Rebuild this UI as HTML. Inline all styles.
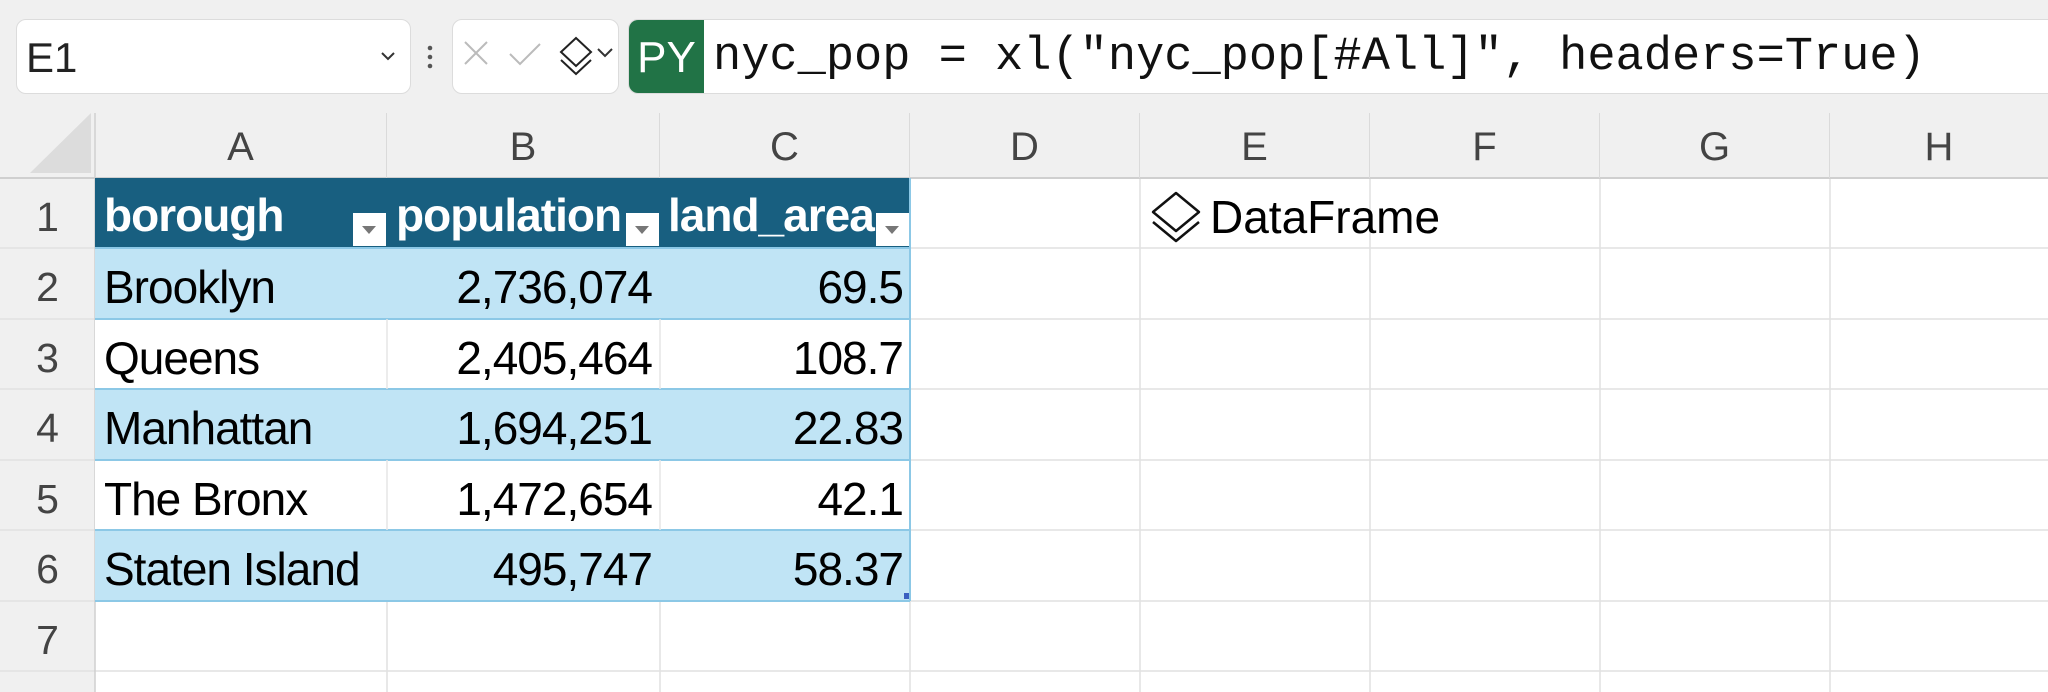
<!DOCTYPE html>
<html><head><meta charset="utf-8"><style>
*{margin:0;padding:0;box-sizing:border-box}
html,body{width:2048px;height:692px;overflow:hidden}
body{background:#f0f0f0;position:relative;font-family:"Liberation Sans",sans-serif}
.abs{position:absolute}
.box{position:absolute;background:#fff;border:1px solid #dcdcdc;border-radius:10px}
.ch{position:absolute;top:113px;height:65px;font-size:40px;color:#444;text-align:center;line-height:68px;border-right:1px solid #dadada}
.rh{position:absolute;left:0;width:95px;font-size:41px;color:#444;text-align:center;height:70px;line-height:78px;overflow:hidden}
.c{position:absolute;font-size:46px;color:#000;line-height:78px;white-space:nowrap;letter-spacing:-1px}
.hd{color:#fff;font-weight:bold;line-height:74px}
.r{text-align:right}
.fb{position:absolute;top:213px;width:33px;height:33px;background:#fff}
.fb:after{content:"";position:absolute;left:9px;top:13px;border-left:7px solid transparent;border-right:7px solid transparent;border-top:8px solid #777}
</style></head><body>
<div class="box" style="left:16px;top:19px;width:395px;height:75px"></div>
<div class="abs" style="left:26px;top:19px;line-height:77px;font-size:42px;color:#222">E1</div>
<svg class="abs" style="left:380px;top:50px" width="16" height="12"><path d="M2 3l6 6 6-6" fill="none" stroke="#333" stroke-width="2"/></svg>
<svg class="abs" style="left:426px;top:44px" width="8" height="28"><circle cx="4" cy="4" r="2.3" fill="#555"/><circle cx="4" cy="13" r="2.3" fill="#555"/><circle cx="4" cy="22" r="2.3" fill="#555"/></svg>
<div class="box" style="left:452px;top:19px;width:167px;height:75px"></div>
<svg class="abs" style="left:462px;top:36px" width="160" height="46">
<path d="M3 6l22 22M25 6L3 28" stroke="#bbb" stroke-width="2" fill="none"/>
<path d="M48 18l10 10 20-20" stroke="#bbb" stroke-width="2" fill="none"/>
<path d="M114 2l15 14-15 14-15-14z" stroke="#222" stroke-width="2" fill="#fff"/>
<path d="M99 24l15 14 15-14" stroke="#222" stroke-width="2" fill="none"/>
<path d="M136 13l7 7 7-7" stroke="#333" stroke-width="2" fill="none"/>
</svg>
<div class="abs" style="left:628px;top:19px;width:1430px;height:75px;background:#fff;border:1px solid #dcdcdc;border-radius:10px 0 0 10px;overflow:hidden">
<div style="position:absolute;left:0;top:0;width:75px;height:75px;background:#217346;color:#fff;font-size:44px;line-height:75px;text-align:center">PY</div>
</div>
<div class="abs" style="left:713px;top:19px;line-height:77px;font-size:47px;font-family:'Liberation Mono',monospace;color:#111;white-space:nowrap">nyc_pop = xl("nyc_pop[#All]", headers=True)</div>

<div class="abs" style="left:95px;top:178px;width:1953px;height:514px;background:#fff"></div>
<svg class="abs" style="left:0;top:0" width="2048" height="692">
<path d="M30 173L91 113V173Z" fill="#dcdcdc"/>
<g stroke="#e1e1e1" stroke-width="1.5">
<line x1="387" y1="178" x2="387" y2="692"/><line x1="660" y1="178" x2="660" y2="692"/>
<line x1="910" y1="178" x2="910" y2="692"/><line x1="1140" y1="178" x2="1140" y2="692"/>
<line x1="1370" y1="178" x2="1370" y2="692"/><line x1="1600" y1="178" x2="1600" y2="692"/>
<line x1="1830" y1="178" x2="1830" y2="692"/>
<line x1="0" y1="248" x2="2048" y2="248"/><line x1="0" y1="319" x2="2048" y2="319"/>
<line x1="0" y1="389" x2="2048" y2="389"/><line x1="0" y1="460" x2="2048" y2="460"/>
<line x1="0" y1="530" x2="2048" y2="530"/><line x1="0" y1="601" x2="2048" y2="601"/>
<line x1="0" y1="671" x2="2048" y2="671"/>
</g>
<line x1="0" y1="178" x2="2048" y2="178" stroke="#cfcfcf" stroke-width="2"/>
<line x1="95" y1="113" x2="95" y2="692" stroke="#cfcfcf" stroke-width="1.5"/>
<rect x="95" y="178" width="815" height="70" fill="#185f80"/>
<rect x="95" y="248" width="815" height="71" fill="#c0e4f5"/>
<rect x="95" y="319" width="815" height="70" fill="#fff"/>
<rect x="95" y="389" width="815" height="71" fill="#c0e4f5"/>
<rect x="95" y="460" width="815" height="70" fill="#fff"/>
<rect x="95" y="530" width="815" height="71" fill="#c0e4f5"/>
<g stroke="#8cc8e6" stroke-width="2"><line x1="95" y1="248" x2="910" y2="248"/><line x1="95" y1="319" x2="910" y2="319"/><line x1="95" y1="389" x2="910" y2="389"/><line x1="95" y1="460" x2="910" y2="460"/><line x1="95" y1="530" x2="910" y2="530"/><line x1="95" y1="601" x2="910" y2="601"/><line x1="910" y1="178" x2="910" y2="601"/></g>
<g stroke="#e6e6e6" stroke-width="1.5"><line x1="387" y1="319" x2="387" y2="389"/><line x1="660" y1="319" x2="660" y2="389"/><line x1="387" y1="460" x2="387" y2="530"/><line x1="660" y1="460" x2="660" y2="530"/></g>
<rect x="904" y="593" width="5" height="6" fill="#3a5fc0"/>
<path d="M1176 193l23 19-23 19-23-19z" stroke="#111" stroke-width="2.5" fill="#fff" stroke-linejoin="round"/>
<path d="M1153 222l23 19 23-19" stroke="#111" stroke-width="2.5" fill="none" stroke-linejoin="round"/>
</svg>
<div class="ch" style="left:95px;width:292px">A</div>
<div class="ch" style="left:387px;width:273px">B</div>
<div class="ch" style="left:660px;width:250px">C</div>
<div class="ch" style="left:910px;width:230px">D</div>
<div class="ch" style="left:1140px;width:230px">E</div>
<div class="ch" style="left:1370px;width:230px">F</div>
<div class="ch" style="left:1600px;width:230px">G</div>
<div class="ch" style="left:1830px;width:218px;border:none">H</div>
<div class="rh" style="top:178px">1</div><div class="rh" style="top:248px">2</div><div class="rh" style="top:319px">3</div><div class="rh" style="top:389px">4</div><div class="rh" style="top:460px">5</div><div class="rh" style="top:530px">6</div><div class="rh" style="top:601px">7</div><div class="rh" style="top:671px;height:21px">8</div>

<div class="c hd" style="left:104px;top:178px">borough</div>
<div class="c hd" style="left:396px;top:178px">population</div>
<div class="c hd" style="left:668px;top:178px">land_area</div>
<div class="fb" style="left:353px"></div><div class="fb" style="left:626px"></div><div class="fb" style="left:876px"></div>

<div class="c" style="left:104px;top:248px">Brooklyn</div>
<div class="c" style="left:104px;top:319px">Queens</div>
<div class="c" style="left:104px;top:389px">Manhattan</div>
<div class="c" style="left:104px;top:460px">The Bronx</div>
<div class="c" style="left:104px;top:530px">Staten Island</div>
<div class="c r" style="left:387px;width:265px;top:248px">2,736,074</div>
<div class="c r" style="left:387px;width:265px;top:319px">2,405,464</div>
<div class="c r" style="left:387px;width:265px;top:389px">1,694,251</div>
<div class="c r" style="left:387px;width:265px;top:460px">1,472,654</div>
<div class="c r" style="left:387px;width:265px;top:530px">495,747</div>
<div class="c r" style="left:660px;width:243px;top:248px">69.5</div>
<div class="c r" style="left:660px;width:243px;top:319px">108.7</div>
<div class="c r" style="left:660px;width:243px;top:389px">22.83</div>
<div class="c r" style="left:660px;width:243px;top:460px">42.1</div>
<div class="c r" style="left:660px;width:243px;top:530px">58.37</div>
<div class="c" style="left:1210px;top:178px;letter-spacing:0">DataFrame</div>
</body></html>
